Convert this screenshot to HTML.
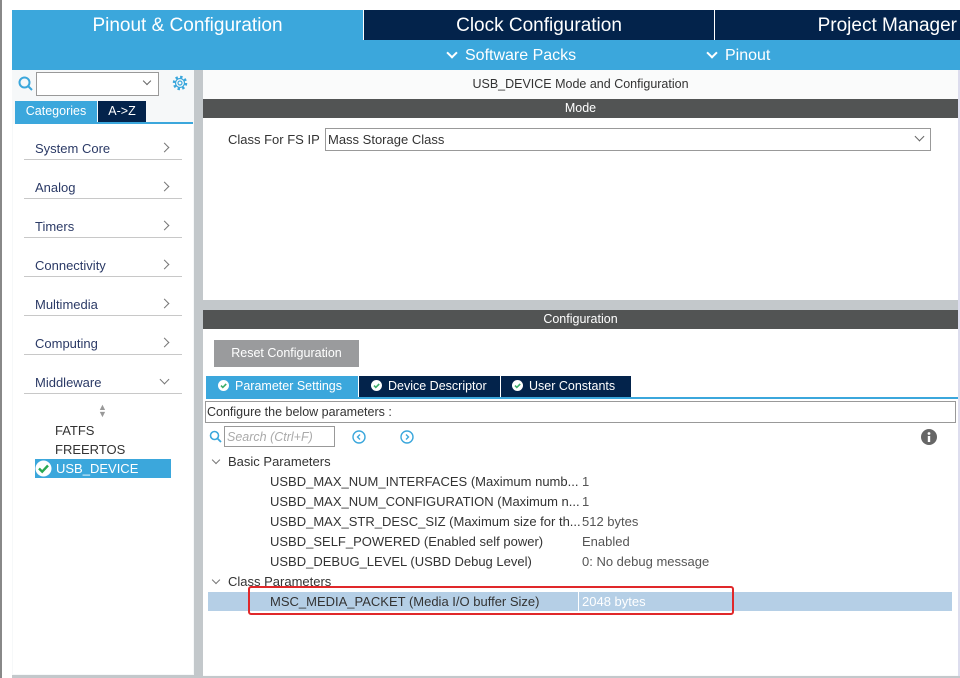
<!DOCTYPE html>
<html><head><meta charset="utf-8"><style>
*{margin:0;padding:0;box-sizing:border-box}
body{width:960px;height:678px;background:#fff;font-family:"Liberation Sans",Arial,sans-serif;position:relative;overflow:hidden;color:#333}
.a{position:absolute}
.t{font-size:13px;color:#333;white-space:nowrap}
.cat{position:absolute;left:24px;width:158px;height:39px;border-bottom:1px solid #c8c8c8;font-size:13px;color:#2b3a66}
.cat span{position:absolute;left:11px;bottom:3px}
.cat i{position:absolute;right:14px;bottom:8px;width:7px;height:7px;border-right:1px solid #777;border-top:1px solid #777;transform:rotate(45deg)}
.ck{display:inline-block;width:11px;height:11px;vertical-align:-1px;margin-right:6px}
.row{position:absolute;left:270px;font-size:13px;color:#333;white-space:nowrap}
.val{position:absolute;left:582px;font-size:13px;color:#555}
.chv{position:absolute;width:8px;height:8px;border-right:2px solid #fff;border-bottom:2px solid #fff;transform:rotate(45deg)}
.tch{position:absolute;width:6px;height:6px;border-right:1px solid #777;border-bottom:1px solid #777;transform:rotate(45deg)}
</style></head><body>
<div class="a" style="left:0;top:0;width:2px;height:678px;background:#888"></div>
<div class="a" style="left:12px;top:10px;width:351px;height:30px;background:#3ba7dc;color:#fff;font-size:19px;text-align:center;line-height:32px">Pinout &amp; Configuration</div>
<div class="a" style="left:364px;top:10px;width:350px;height:30px;background:#03234b;color:#fff;font-size:19px;text-align:center;line-height:32px">Clock Configuration</div>
<div class="a" style="left:715px;top:10px;width:245px;height:30px;background:#03234b;color:#fff;font-size:19px;line-height:32px;text-align:right;padding-right:3px">Project Manager</div>
<div class="a" style="left:12px;top:40px;width:948px;height:30px;background:#3ba7dc"></div>
<div class="chv" style="left:448px;top:49px"></div>
<div class="a" style="left:465px;top:47px;color:#fff;font-size:16px">Software Packs</div>
<div class="chv" style="left:708px;top:49px"></div>
<div class="a" style="left:725px;top:47px;color:#fff;font-size:16px">Pinout</div>
<div class="a" style="left:12px;top:70px;width:182px;height:606px;background:#f6f8f9"></div>
<div class="a" style="left:13px;top:124px;width:180px;height:550px;background:#fff"></div>
<div class="a" style="left:194px;top:70px;width:9px;height:606px;background:#c3c8cb"></div>
<div class="a" style="left:12px;top:675px;width:948px;height:3px;background:#c3c8cb"></div>
<svg class="a" style="left:18px;top:76px" width="16" height="16"><circle cx="6.5" cy="6.5" r="5" fill="none" stroke="#3ba7dc" stroke-width="2"/><line x1="10" y1="10" x2="14" y2="14" stroke="#3ba7dc" stroke-width="2"/></svg>
<div class="a" style="left:36px;top:72px;width:123px;height:24px;border:1px solid #999;background:#fff"></div>
<div class="a" style="left:144px;top:78px;width:6px;height:6px;border-right:1px solid #666;border-bottom:1px solid #666;transform:rotate(45deg)"></div>
<svg class="a" style="left:171px;top:74px" width="18" height="18"><circle cx="9" cy="9" r="6" fill="none" stroke="#3ba7dc" stroke-width="2.5" stroke-dasharray="2.4 2.3"/><circle cx="9" cy="9" r="4.5" fill="none" stroke="#3ba7dc" stroke-width="1.2"/><circle cx="9" cy="9" r="2" fill="none" stroke="#3ba7dc" stroke-width="1.2"/></svg>
<div class="a" style="left:15px;top:101px;width:82px;height:21px;background:#3ba7dc;color:#fff;font-size:12.5px;line-height:21px;text-align:center">Categories</div>
<div class="a" style="left:98px;top:101px;width:48px;height:21px;background:#03234b;color:#fff;font-size:12.5px;line-height:21px;text-align:center">A-&gt;Z</div>
<div class="a" style="left:15px;top:122px;width:178px;height:2px;background:#3ba7dc"></div>
<div class="cat" style="top:121px"><span>System Core</span><i></i></div>
<div class="cat" style="top:160px"><span>Analog</span><i></i></div>
<div class="cat" style="top:199px"><span>Timers</span><i></i></div>
<div class="cat" style="top:238px"><span>Connectivity</span><i></i></div>
<div class="cat" style="top:277px"><span>Multimedia</span><i></i></div>
<div class="cat" style="top:316px"><span>Computing</span><i></i></div>
<div class="cat" style="top:355px"><span>Middleware</span><i style="transform:rotate(135deg);bottom:10px"></i></div>
<div class="a" style="left:98px;top:404px;font-size:9px;color:#999;line-height:7px">▲<br>▼</div>
<div class="a t" style="left:55px;top:423px">FATFS</div>
<div class="a t" style="left:55px;top:442px">FREERTOS</div>
<div class="a" style="left:35px;top:459px;width:136px;height:19px;background:#3ba7dc"></div>
<svg class="a" style="left:35px;top:460px" width="17" height="17"><circle cx="8.5" cy="8.5" r="8" fill="#fff"/><path d="M4 8.5l3.2 3.2L13 5.5" fill="none" stroke="#2aa952" stroke-width="2.4"/></svg>
<div class="a" style="left:56px;top:461px;color:#fff;font-size:13px">USB_DEVICE</div>
<div class="a" style="left:203px;top:70px;width:755px;height:606px;background:#fafbfb"></div>
<div class="a" style="left:958px;top:70px;width:2px;height:606px;background:#dde"></div>
<div class="a" style="left:203px;top:77px;width:755px;text-align:center;font-size:12.5px;color:#333">USB_DEVICE Mode and Configuration</div>
<div class="a" style="left:203px;top:99px;width:755px;height:19px;background:#525454;color:#fff;font-size:12.5px;text-align:center;line-height:19px">Mode</div>
<div class="a" style="left:203px;top:118px;width:755px;height:182px;background:#fff"></div>
<div class="a t" style="left:228px;top:132px">Class For FS IP</div>
<div class="a" style="left:325px;top:128px;width:606px;height:23px;border:1px solid #999;background:#fff;font-size:13px;padding:3px 2px;color:#333">Mass Storage Class</div>
<div class="a" style="left:916px;top:133px;width:7px;height:7px;border-right:1px solid #666;border-bottom:1px solid #666;transform:rotate(45deg)"></div>
<div class="a" style="left:203px;top:300px;width:755px;height:10px;background:#c3c8cb"></div>
<div class="a" style="left:203px;top:310px;width:755px;height:19px;background:#525454;color:#fff;font-size:12.5px;text-align:center;line-height:19px">Configuration</div>
<div class="a" style="left:203px;top:329px;width:755px;height:346px;background:#fff"></div>
<div class="a" style="left:214px;top:340px;width:145px;height:27px;background:#9a9b9d;color:#fff;font-size:12.5px;line-height:27px;text-align:center">Reset Configuration</div>
<div class="a" style="left:206px;top:376px;width:152px;height:21px;background:#3ba7dc;color:#fff;font-size:12.5px;line-height:21px;padding-left:12px"><svg class="ck" viewBox="0 0 11 11"><circle cx="5.5" cy="5.5" r="5.5" fill="#fff"/><path d="M3 5.6l1.8 1.8L8.2 4" fill="none" stroke="#3cae6a" stroke-width="1.6"/></svg>Parameter Settings</div>
<div class="a" style="left:359px;top:376px;width:141px;height:21px;background:#03234b;color:#fff;font-size:12.5px;line-height:21px;padding-left:12px"><svg class="ck" viewBox="0 0 11 11"><circle cx="5.5" cy="5.5" r="5.5" fill="#fff"/><path d="M3 5.6l1.8 1.8L8.2 4" fill="none" stroke="#3cae6a" stroke-width="1.6"/></svg>Device Descriptor</div>
<div class="a" style="left:501px;top:376px;width:130px;height:21px;background:#03234b;color:#fff;font-size:12.5px;line-height:21px;padding-left:11px"><svg class="ck" viewBox="0 0 11 11"><circle cx="5.5" cy="5.5" r="5.5" fill="#fff"/><path d="M3 5.6l1.8 1.8L8.2 4" fill="none" stroke="#3cae6a" stroke-width="1.6"/></svg>User Constants</div>
<div class="a" style="left:206px;top:397px;width:752px;height:2px;background:#3ba7dc"></div>
<div class="a" style="left:205px;top:401px;width:751px;height:22px;border:1px solid #999;font-size:12.5px;padding:3px 1px;color:#333">Configure the below parameters :</div>
<svg class="a" style="left:209px;top:430px" width="14" height="14"><circle cx="5.5" cy="5.5" r="4" fill="none" stroke="#3ba7dc" stroke-width="1.6"/><line x1="8.5" y1="8.5" x2="12" y2="12" stroke="#3ba7dc" stroke-width="1.8"/></svg>
<div class="a" style="left:224px;top:426px;width:111px;height:21px;border:1px solid #999;font-size:12.5px;font-style:italic;color:#aaa;padding:3px 2px">Search (Ctrl+F)</div>
<svg class="a" style="left:352px;top:430px" width="14" height="14"><circle cx="7" cy="7" r="6" fill="none" stroke="#3ba7dc" stroke-width="1.4"/><path d="M8 4.5L5.5 7 8 9.5" fill="none" stroke="#3ba7dc" stroke-width="1.4"/></svg>
<svg class="a" style="left:400px;top:430px" width="14" height="14"><circle cx="7" cy="7" r="6" fill="none" stroke="#3ba7dc" stroke-width="1.4"/><path d="M6 4.5L8.5 7 6 9.5" fill="none" stroke="#3ba7dc" stroke-width="1.4"/></svg>
<svg class="a" style="left:921px;top:429px" width="16" height="16"><circle cx="8" cy="8" r="8" fill="#666"/><rect x="6.8" y="7" width="2.4" height="6" fill="#fff"/><circle cx="8" cy="4.5" r="1.4" fill="#fff"/></svg>
<div class="tch" style="left:213px;top:457px"></div>
<div class="a t" style="left:228px;top:454px">Basic Parameters</div>
<div class="row" style="top:474px">USBD_MAX_NUM_INTERFACES (Maximum numb...</div><div class="val" style="top:474px">1</div>
<div class="row" style="top:494px">USBD_MAX_NUM_CONFIGURATION (Maximum n...</div><div class="val" style="top:494px">1</div>
<div class="row" style="top:514px">USBD_MAX_STR_DESC_SIZ (Maximum size for th...</div><div class="val" style="top:514px">512 bytes</div>
<div class="row" style="top:534px">USBD_SELF_POWERED (Enabled self power)</div><div class="val" style="top:534px">Enabled</div>
<div class="row" style="top:554px">USBD_DEBUG_LEVEL (USBD Debug Level)</div><div class="val" style="top:554px">0: No debug message</div>
<div class="tch" style="left:213px;top:577px"></div>
<div class="a t" style="left:228px;top:574px">Class Parameters</div>
<div class="a" style="left:208px;top:592px;width:744px;height:19px;background:#b5cfe6"></div>
<div class="a" style="left:578px;top:592px;width:1px;height:19px;background:#fff"></div>
<div class="row" style="top:594px">MSC_MEDIA_PACKET (Media I/O buffer Size)</div>
<div class="val" style="top:594px;color:#fff">2048 bytes</div>
<div class="a" style="left:248px;top:586px;width:486px;height:29px;border:2.5px solid #e0282a;border-radius:3px"></div>
</body></html>
